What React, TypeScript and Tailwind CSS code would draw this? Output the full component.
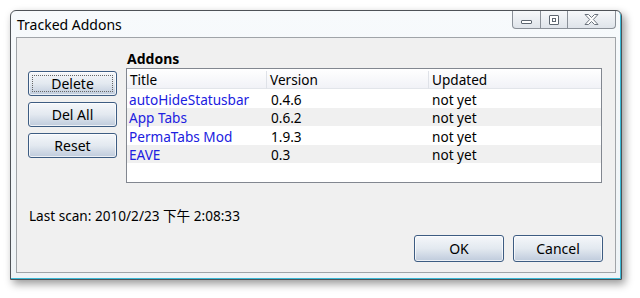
const addons = [
  { title: 'autoHideStatusbar', version: '0.4.6', updated: 'not yet' },
  { title: 'App Tabs', version: '0.6.2', updated: 'not yet' },
  { title: 'PermaTabs Mod', version: '1.9.3', updated: 'not yet' },
  { title: 'EAVE', version: '0.3', updated: 'not yet' },
]

function WinButton({ label, focused, className }: { label: string; focused?: boolean; className: string }) {
  return (
    <button
      className={`relative flex items-center justify-center rounded-[3px] border border-[#3d5c82] bg-gradient-to-b from-[#f5f7fa] via-[#e3e9f0] to-[#bfcbdc] text-[14px] text-black shadow-[inset_0_0_0_1px_rgba(255,255,255,0.7)] ${className}`}
    >
      {focused && <span className="absolute inset-[3px] border border-dotted border-[#666]" />}
      {label}
    </button>
  )
}

function CaptionButtons() {
  return (
    <div className="mr-[5px] flex h-[18px] overflow-hidden rounded-b-[4px] border border-t-0 border-[#8a9098] bg-gradient-to-b from-[#f6f8fa] to-[#dfe4ea]">
      <div className="flex w-[28px] items-end justify-center border-r border-[#8a9098] pb-[4px]">
        <div className="h-[4px] w-[11px] rounded-[1px] border border-[#5d6670] bg-white" />
      </div>
      <div className="flex w-[27px] items-center justify-center border-r border-[#8a9098]">
        <div className="flex h-[10px] w-[10px] items-center justify-center rounded-[1px] border border-[#5d6670] bg-white">
          <div className="h-[4px] w-[4px] border border-[#5d6670]" />
        </div>
      </div>
      <div className="flex w-[47px] items-center justify-center">
        <svg width="17" height="13" viewBox="0 0 17 13">
          <path
            d="M2 1.5h3.5l3 3 3-3h3.5l-4.7 5 4.7 5h-3.5l-3-3-3 3h-3.5l4.7-5z"
            fill="#fff"
            stroke="#6a727c"
            strokeWidth="1"
            strokeLinejoin="round"
          />
        </svg>
      </div>
    </div>
  )
}

export default function App() {
  return (
    <div className="h-[298px] w-[640px] bg-white pl-[10px] pt-[10px] font-['Noto_Sans','Noto_Sans_CJK_TC',sans-serif] text-[13.6px] text-black">
      <div className="flex h-[270px] w-[612px] flex-col rounded-t-[6px] border border-[#4e5257] bg-gradient-to-b from-[#f7fafc] to-[#eef3f6] shadow-[inset_-1px_-1px_0_#3ab9d6,3px_4px_9px_rgba(0,0,0,0.4)]">
        <div className="flex h-[26px] items-start justify-between">
          <span className="pl-[6px] pt-[4px] text-[14px] leading-[20px]">Tracked Addons</span>
          <CaptionButtons />
        </div>
        <div className="mx-[5px] mb-[6px] flex flex-1 flex-col border border-[#a0a4a8] bg-[#f0f0f0]">
          <div className="flex">
            <div className="ml-[11px] mt-[33px] flex w-[89px] flex-col gap-[6px]">
              <WinButton label="Delete" focused className="h-[25px]" />
              <WinButton label="Del All" className="h-[25px]" />
              <WinButton label="Reset" className="h-[25px]" />
            </div>
            <div className="ml-[9px] flex w-[476px] flex-col">
              <div className="mt-[12px] h-[18px] pl-[1px] text-[14px] font-bold leading-[18px]">Addons</div>
              <div className="h-[115px] border border-[#828790] bg-white">
                <div className="flex h-[20px] items-center border-b border-[#e2e5ea] bg-gradient-to-b from-white to-[#f1f2f7] pt-[2px] leading-[18px]">
                  <div className="w-[140px] border-r border-[#dfe2e8] pl-[3px]">Title</div>
                  <div className="w-[162px] border-r border-[#dfe2e8] pl-[3px]">Version</div>
                  <div className="flex-1 pl-[3px]">Updated</div>
                </div>
                {addons.map((a, i) => (
                  <div
                    key={a.title}
                    className={`flex h-[18.5px] items-center pt-[3px] leading-[16px] ${i % 2 === 1 ? 'bg-[#f0f0f0]' : 'bg-white'}`}
                  >
                    <div className="w-[141px] pl-[2px] text-[#2020e0]">{a.title}</div>
                    <div className="w-[162px] pl-[3px]">{a.version}</div>
                    <div className="flex-1 pl-[2px]">{a.updated}</div>
                  </div>
                ))}
              </div>
            </div>
          </div>
          <div className="ml-[12px] mt-[24px] leading-[18px]">Last scan: 2010/2/23 下午 2:08:33</div>
          <div className="mr-[12px] mt-[10px] flex justify-end gap-[9px]">
            <WinButton label="OK" className="h-[27px] w-[90px]" />
            <WinButton label="Cancel" className="h-[27px] w-[90px]" />
          </div>
        </div>
      </div>
    </div>
  )
}
